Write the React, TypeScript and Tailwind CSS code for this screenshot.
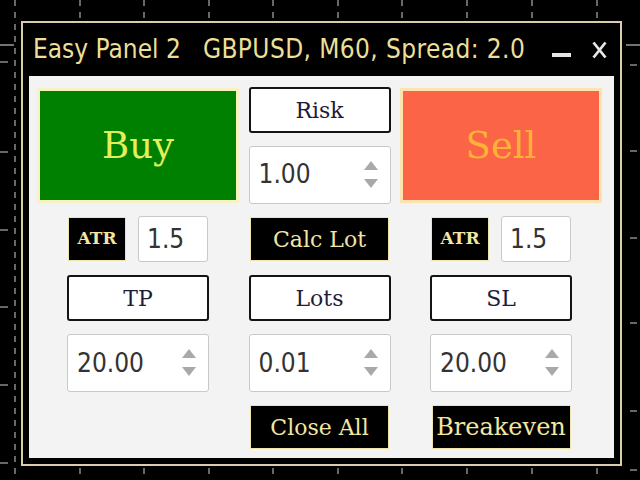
import React from 'react';

const serif = { fontFamily: '"DejaVu Serif", "Liberation Serif", serif' };
const sans = { fontFamily: '"DejaVu Sans Condensed", "DejaVu Sans", sans-serif' };

function ChartGrid() {
  const xs = [15, 80, 144, 209, 273, 338, 402, 467, 532, 597];
  const ys = [62, 152, 230, 307, 385, 463];
  return (
    <svg className="absolute inset-0" width="640" height="480" viewBox="0 0 640 480">
      {xs.map((x) => (
        <line key={x} x1={x} y1={0} x2={x} y2={480} stroke="#8a8a8a" strokeWidth="1.5" strokeDasharray="6 6" />
      ))}
      {ys.map((y) => (
        <line key={y} x1={0} y1={y} x2={8} y2={y} stroke="#8a8a8a" strokeWidth="1.5" />
      ))}
      {[65, 151, 238, 323, 411, 470].map((y) => (
        <line key={y} x1={630} y1={y} x2={637} y2={y} stroke="#8a8a8a" strokeWidth="1.5" />
      ))}
      <line x1={0} y1={45} x2={14} y2={45} stroke="#9a9a9a" strokeWidth="1.5" />
      <line x1={626} y1={45} x2={640} y2={45} stroke="#9a9a9a" strokeWidth="1.5" />
    </svg>
  );
}

function Spinner({ value, small }: { value: string; small?: boolean }) {
  return (
    <div
      className={`flex items-center justify-between bg-white border border-[#c9c9c9] rounded-[3px] ${
        small ? 'w-[70px] h-[46px] pl-[8px]' : 'w-[142px] h-[58px] pl-[9px] pr-[12px]'
      }`}
    >
      <span className="text-[26px] text-[#333]" style={sans}>
        {value}
      </span>
      {!small && (
        <svg width="14" height="28" viewBox="0 0 14 28">
          <polygon points="7,0 14,9 0,9" fill="#a9a9a9" />
          <polygon points="0,18 14,18 7,27" fill="#a9a9a9" />
        </svg>
      )}
    </div>
  );
}

function WhiteButton({ label }: { label: string }) {
  return (
    <div
      className="w-[142px] h-[46px] flex items-center justify-center bg-white border-2 border-[#141414] rounded-[3px] text-[22px] text-[#1c1c3c]"
      style={serif}
    >
      {label}
    </div>
  );
}

function BlackButton({ label, wide, big }: { label: string; wide?: boolean; big?: boolean }) {
  return (
    <div
      className={`h-[44px] flex items-center justify-center bg-black border border-[#efe3ae] text-[#f1e6a2] ${
        wide ? (big ? 'w-[139px] text-[24px]' : 'w-[139px] text-[22px]') : 'w-[58px] text-[17px] font-bold'
      }`}
      style={serif}
    >
      {label}
    </div>
  );
}

function AtrRow() {
  return (
    <div className="flex items-center gap-[12px]">
      <BlackButton label="ATR" />
      <Spinner value="1.5" small />
    </div>
  );
}

export default function App() {
  return (
    <div className="relative w-[640px] h-[480px] bg-black overflow-hidden pl-[21px] pt-[21px]">
      <ChartGrid />
      <div className="relative w-[601px] h-[445px] bg-black border-2 border-[#dccdaa] flex flex-col">
        {/* Title bar */}
        <div className="h-[53px] flex items-center pl-[10px] pr-[13px] text-[#ecdf98]" style={sans}>
          <span className="text-[26px]">Easy Panel 2</span>
          <span className="text-[26px] ml-[22px] tracking-[0.4px]">GBPUSD, M60, Spread: 2.0</span>
          <div className="ml-auto flex items-end gap-[21px]">
            <div className="w-[19px] h-[4px] bg-[#e6e6e6] mb-[2px]" />
            <svg width="15" height="18" viewBox="0 0 15 18">
              <path d="M1.5 1.5 L13.5 16.5 M13.5 1.5 L1.5 16.5" stroke="#e6e6e6" strokeWidth="2.8" />
            </svg>
          </div>
        </div>

        {/* Content */}
        <div className="flex-1 mx-[6px] mb-[6px] bg-[#f3f3f3] pt-[11px] pl-[8px]">
          <div className="grid grid-cols-[202px_141px_202px] grid-rows-[46px_57px_46px_46px_58px_44px] gap-x-[10px] gap-y-[13px] justify-items-center items-center">
            <div
              className="row-span-2 self-start mt-[1px] w-[202px] h-[115px] bg-[#008000] border-[3px] border-[#f7f2c2] flex items-center justify-center text-[37px] text-[#e4ef5c]"
              style={serif}
            >
              Buy
            </div>
            <WhiteButton label="Risk" />
            <div
              className="row-span-2 self-start mt-[1px] w-[202px] h-[115px] bg-[#fb6446] border-[3px] border-[#fde3b0] flex items-center justify-center text-[37px] text-[#fbb236]"
              style={serif}
            >
              Sell
            </div>
            <Spinner value="1.00" />

            <AtrRow />
            <BlackButton label="Calc Lot" wide />
            <AtrRow />

            <WhiteButton label="TP" />
            <WhiteButton label="Lots" />
            <WhiteButton label="SL" />

            <Spinner value="20.00" />
            <Spinner value="0.01" />
            <Spinner value="20.00" />

            <div />
            <BlackButton label="Close All" wide />
            <BlackButton label="Breakeven" wide big />
          </div>
        </div>
      </div>
    </div>
  );
}
